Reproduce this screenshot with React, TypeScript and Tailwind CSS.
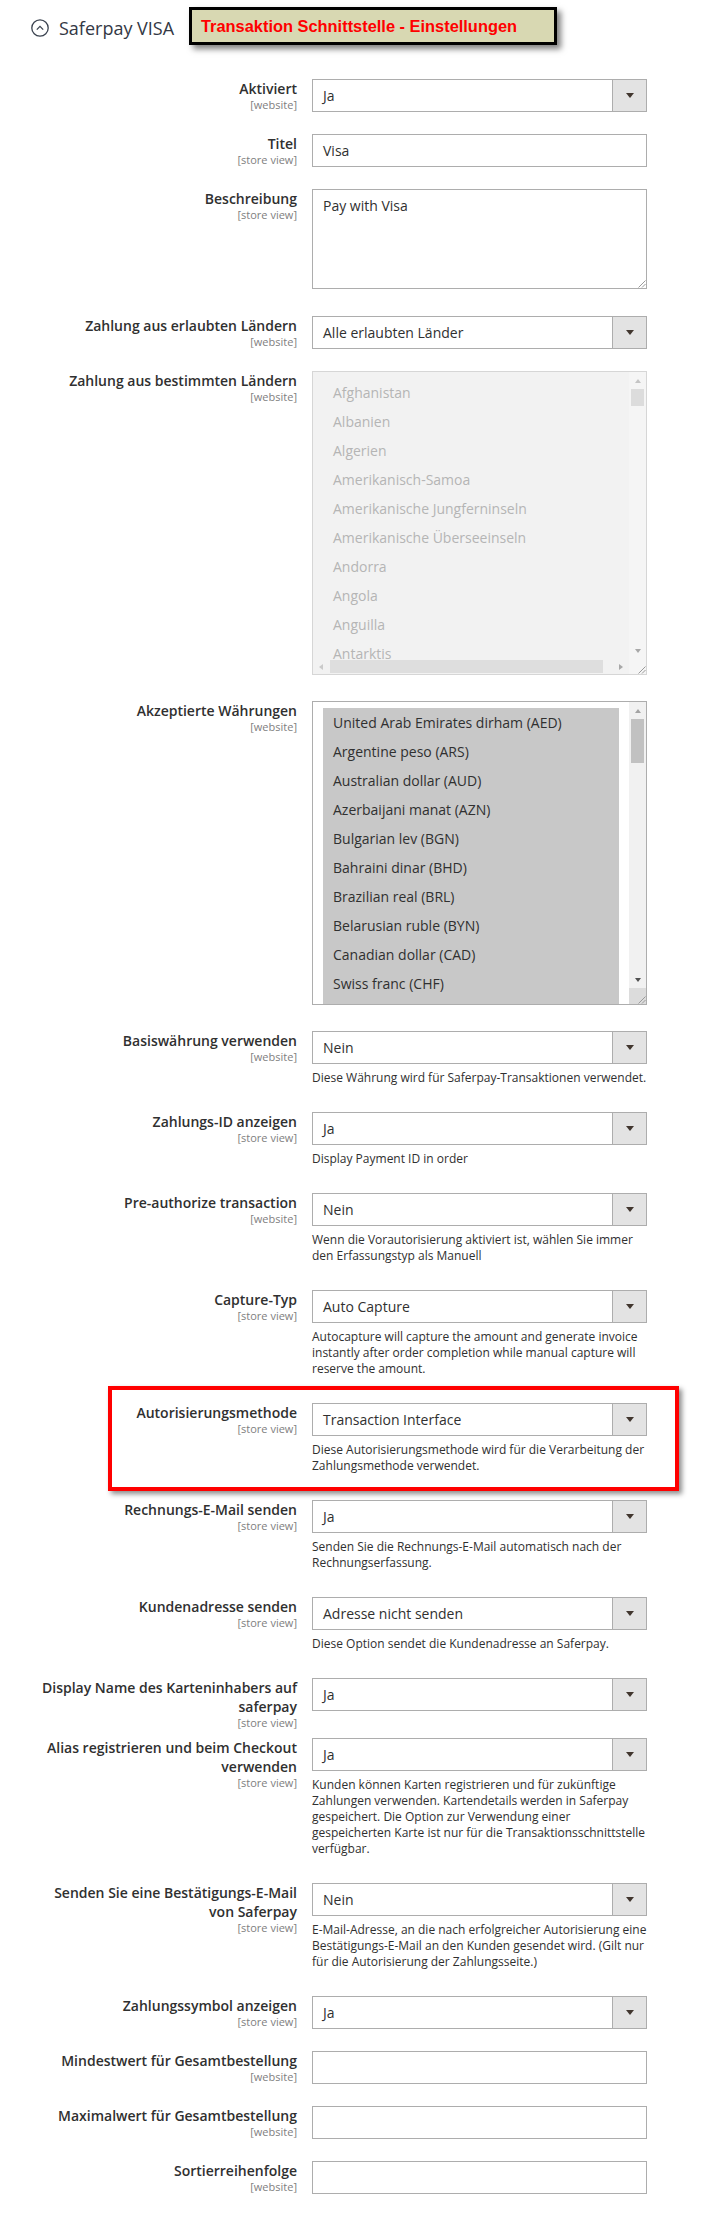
import type { ReactNode } from 'react';

const countries = [
  'Afghanistan',
  'Albanien',
  'Algerien',
  'Amerikanisch-Samoa',
  'Amerikanische Jungferninseln',
  'Amerikanische Überseeinseln',
  'Andorra',
  'Angola',
  'Anguilla',
  'Antarktis',
  'Antigua und Barbuda',
];

const currencies = [
  'United Arab Emirates dirham (AED)',
  'Argentine peso (ARS)',
  'Australian dollar (AUD)',
  'Azerbaijani manat (AZN)',
  'Bulgarian lev (BGN)',
  'Bahraini dinar (BHD)',
  'Brazilian real (BRL)',
  'Belarusian ruble (BYN)',
  'Canadian dollar (CAD)',
  'Swiss franc (CHF)',
  'Chilean peso (CLP)',
];

const Grip = () => (
  <svg width="10" height="10" viewBox="0 0 10 10" className="block">
    <path d="M9.5 2.5 L2.5 9.5 M9.5 6 L6 9.5" stroke="#9a9a9a" strokeWidth="1" fill="none" />
  </svg>
);

const Select = ({ value }: { value: string }) => (
  <div className="flex h-[33px] border border-[#adadad] bg-white">
    <div className="flex flex-1 items-center pl-[10px] text-[14px] whitespace-nowrap">{value}</div>
    <div className="flex w-[34px] items-center justify-center border-l border-[#adadad] bg-[#e3e3e3]">
      <div className="h-0 w-0 border-x-[4px] border-t-[5px] border-x-transparent border-t-[#41362f]" />
    </div>
  </div>
);

const Input = ({ value = '' }: { value?: string }) => (
  <div className="flex h-[33px] items-center border border-[#adadad] bg-white pl-[10px] text-[14px]">{value}</div>
);

const Row = ({
  label,
  scope,
  note,
  children,
  last,
}: {
  label: string[];
  scope: string;
  note?: string[];
  children: ReactNode;
  last?: boolean;
}) => (
  <div className={last ? 'flex items-start pb-[19px]' : 'flex items-start pb-[22px]'}>
    <div className="ml-[37px] flex w-[260px] shrink-0 items-start justify-end">
      <div className="relative text-right text-[14px] font-semibold leading-[19px] text-[#303030]">
        {label.map(line => (
          <div key={line} className="whitespace-nowrap">
            {line}
          </div>
        ))}
        <span className="absolute right-0 top-full whitespace-nowrap text-[11px] font-normal leading-[13px] text-[#808080]">
          [{scope}]
        </span>
      </div>
    </div>
    <div className="ml-[15px] w-[335px] shrink-0">
      {children}
      {note && (
        <div className="mb-[4px] mt-[6px] text-[12px] leading-[16px] text-[#303030]">
          {note.map(line => (
            <div key={line} className="whitespace-nowrap">
              {line}
            </div>
          ))}
        </div>
      )}
    </div>
  </div>
);

export default function App() {
  return (
    <div className="relative min-h-[2213px] w-[711px] bg-white font-['Open_Sans',sans-serif] text-[#303030]">
      <div className="relative flex h-[56px] items-center pl-[31px]">
        <svg width="18" height="18" viewBox="0 0 18 18" className="block">
          <circle cx="9" cy="9" r="8.2" stroke="#3b4350" strokeWidth="1.3" fill="none" />
          <path d="M5.8 10.6 L9 7.4 L12.2 10.6" stroke="#3b4350" strokeWidth="1.3" fill="none" />
        </svg>
        <span className="ml-[10px] text-[18px] font-medium text-[#333844]">Saferpay VISA</span>
        <div className="absolute left-[189px] top-[7px] flex h-[38px] w-[368px] items-center border-[3px] border-black bg-[#d8d8b2] pl-[9px] shadow-[4px_4px_6px_rgba(0,0,0,0.5)]">
          <span className="whitespace-nowrap font-['Liberation_Sans',Arial,sans-serif] text-[16.4px] font-bold text-[#ff0000]">
            Transaktion Schnittstelle - Einstellungen
          </span>
        </div>
      </div>

      <div className="pt-[23px]">
        <Row label={['Aktiviert']} scope="website">
          <Select value="Ja" />
        </Row>
        <Row label={['Titel']} scope="store view">
          <Input value="Visa" />
        </Row>
        <Row label={['Beschreibung']} scope="store view">
          <div className="relative mb-[5px] h-[100px] border border-[#adadad] bg-white px-[10px] pt-[6px] text-[14px] leading-[19px]">
            Pay with Visa
            <div className="absolute bottom-0 right-0">
              <Grip />
            </div>
          </div>
        </Row>
        <Row label={['Zahlung aus erlaubten Ländern']} scope="website">
          <Select value="Alle erlaubten Länder" />
        </Row>
        <Row label={['Zahlung aus bestimmten Ländern']} scope="website">
          <div className="mb-[4px] flex h-[304px] flex-col border border-[#d6d6d6] bg-[#f2f2f2]">
            <div className="flex min-h-0 flex-1">
              <div className="flex-1 overflow-hidden pl-[10px] pt-[6px]">
                {countries.map(c => (
                  <div key={c} className="h-[29px] whitespace-nowrap pl-[10px] text-[14px] leading-[29px] text-[#b5b5b5]">
                    {c}
                  </div>
                ))}
              </div>
              <div className="flex w-[17px] flex-col bg-[#f5f5f5]">
                <div className="flex h-[17px] items-center justify-center">
                  <div className="h-0 w-0 border-x-[3.5px] border-b-[4px] border-x-transparent border-b-[#c4c4c4]" />
                </div>
                <div className="flex-1">
                  <div className="mx-[2px] h-[17px] bg-[#dcdcdc]" />
                </div>
                <div className="flex h-[17px] items-center justify-center">
                  <div className="h-0 w-0 border-x-[3.5px] border-t-[4px] border-x-transparent border-t-[#a8a8a8]" />
                </div>
              </div>
            </div>
            <div className="flex h-[15px]">
              <div className="flex w-[16px] items-center justify-center">
                <div className="h-0 w-0 border-y-[3.5px] border-r-[4px] border-y-transparent border-r-[#cacaca]" />
              </div>
              <div className="flex flex-1 items-center">
                <div className="ml-[1px] h-[13px] w-[273px] bg-[#dedede]" />
              </div>
              <div className="flex w-[16px] items-center justify-center">
                <div className="h-0 w-0 border-y-[3.5px] border-l-[4px] border-y-transparent border-l-[#a8a8a8]" />
              </div>
              <div className="flex w-[17px] items-end justify-end bg-[#f5f5f5]">
                <Grip />
              </div>
            </div>
          </div>
        </Row>
        <Row label={['Akzeptierte Währungen']} scope="website">
          <div className="mb-[4px] flex h-[304px] border border-[#adadad] bg-white">
            <div className="flex-1 overflow-hidden px-[10px] pt-[6px]">
              {currencies.map(c => (
                <div key={c} className="h-[29px] whitespace-nowrap bg-[#c8c8c8] pl-[10px] text-[14px] leading-[29px] text-[#303030]">
                  {c}
                </div>
              ))}
            </div>
            <div className="flex w-[17px] flex-col bg-[#f1f1f1]">
              <div className="flex h-[17px] items-center justify-center">
                <div className="h-0 w-0 border-x-[3.5px] border-b-[4px] border-x-transparent border-b-[#a3a3a3]" />
              </div>
              <div className="flex-1">
                <div className="mx-[2px] h-[44px] bg-[#c1c1c1]" />
              </div>
              <div className="flex h-[17px] items-center justify-center">
                <div className="h-0 w-0 border-x-[3.5px] border-t-[4px] border-x-transparent border-t-[#505050]" />
              </div>
              <div className="flex h-[16px] items-end justify-end bg-[#dcdcdc]">
                <Grip />
              </div>
            </div>
          </div>
        </Row>
        <Row
          label={['Basiswährung verwenden']}
          scope="website"
          note={['Diese Währung wird für Saferpay-Transaktionen verwendet.']}
        >
          <Select value="Nein" />
        </Row>
        <Row label={['Zahlungs-ID anzeigen']} scope="store view" note={['Display Payment ID in order']}>
          <Select value="Ja" />
        </Row>
        <Row
          label={['Pre-authorize transaction']}
          scope="website"
          note={['Wenn die Vorautorisierung aktiviert ist, wählen Sie immer', 'den Erfassungstyp als Manuell']}
        >
          <Select value="Nein" />
        </Row>
        <Row
          label={['Capture-Typ']}
          scope="store view"
          note={[
            'Autocapture will capture the amount and generate invoice',
            'instantly after order completion while manual capture will',
            'reserve the amount.',
          ]}
        >
          <Select value="Auto Capture" />
        </Row>
        <div className="relative">
          <Row
            label={['Autorisierungsmethode']}
            scope="store view"
            note={['Diese Autorisierungsmethode wird für die Verarbeitung der', 'Zahlungsmethode verwendet.']}
          >
            <Select value="Transaction Interface" />
          </Row>
          <div className="pointer-events-none absolute -top-[17px] left-[108px] h-[105px] w-[571px] border-[4px] border-[#ff0000] shadow-[3px_3px_5px_rgba(0,0,0,0.45)]" />
        </div>
        <Row
          label={['Rechnungs-E-Mail senden']}
          scope="store view"
          note={['Senden Sie die Rechnungs-E-Mail automatisch nach der', 'Rechnungserfassung.']}
        >
          <Select value="Ja" />
        </Row>
        <Row
          label={['Kundenadresse senden']}
          scope="store view"
          note={['Diese Option sendet die Kundenadresse an Saferpay.']}
        >
          <Select value="Adresse nicht senden" />
        </Row>
        <Row label={['Display Name des Karteninhabers auf', 'saferpay']} scope="store view">
          <Select value="Ja" />
        </Row>
        <Row
          label={['Alias registrieren und beim Checkout', 'verwenden']}
          scope="store view"
          note={[
            'Kunden können Karten registrieren und für zukünftige',
            'Zahlungen verwenden. Kartendetails werden in Saferpay',
            'gespeichert. Die Option zur Verwendung einer',
            'gespeicherten Karte ist nur für die Transaktionsschnittstelle',
            'verfügbar.',
          ]}
        >
          <Select value="Ja" />
        </Row>
        <Row
          label={['Senden Sie eine Bestätigungs-E-Mail', 'von Saferpay']}
          scope="store view"
          note={[
            'E-Mail-Adresse, an die nach erfolgreicher Autorisierung eine',
            'Bestätigungs-E-Mail an den Kunden gesendet wird. (Gilt nur',
            'für die Autorisierung der Zahlungsseite.)',
          ]}
        >
          <Select value="Nein" />
        </Row>
        <Row label={['Zahlungssymbol anzeigen']} scope="store view">
          <Select value="Ja" />
        </Row>
        <Row label={['Mindestwert für Gesamtbestellung']} scope="website">
          <Input />
        </Row>
        <Row label={['Maximalwert für Gesamtbestellung']} scope="website">
          <Input />
        </Row>
        <Row label={['Sortierreihenfolge']} scope="website" last>
          <Input />
        </Row>
      </div>
    </div>
  );
}
